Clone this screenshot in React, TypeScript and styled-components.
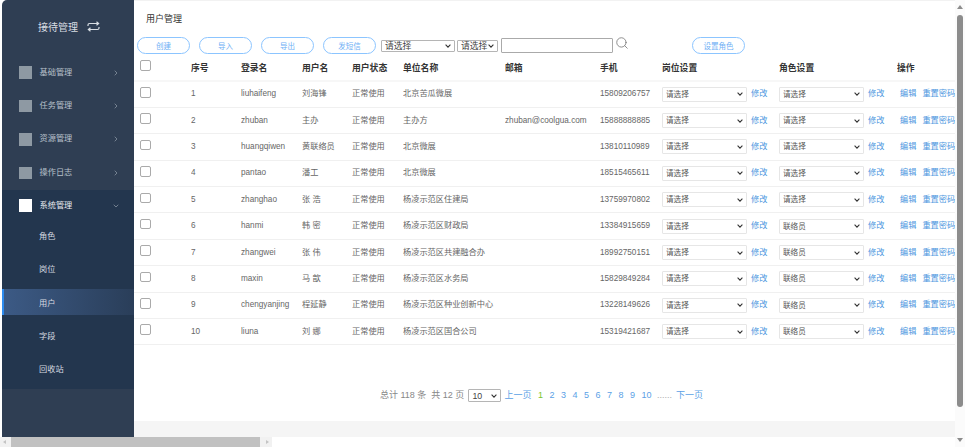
import { ChevronDown, ChevronRight, Search } from "lucide-react";
import styled, { createGlobalStyle, css } from "styled-components";

const GlobalStyle = createGlobalStyle`
  html, body {
    margin: 0;
    padding: 0;
    background: #fff;
    overflow: hidden;
  }
  * {
    box-sizing: border-box;
  }
  body {
    font-family: "Liberation Sans", "Noto Sans CJK SC", sans-serif;
  }
`;

const selectArrow =
  "data:image/svg+xml,%3Csvg xmlns='http://www.w3.org/2000/svg' width='6' height='4' viewBox='0 0 6 4'%3E%3Cpath d='M.6.7 3 3.1 5.4.7' fill='none' stroke='%23333' stroke-width='1.1'/%3E%3C/svg%3E";

const selectBase = css`
  appearance: none;
  padding: 0 0 0 3px;
  border-radius: 1px;
  background: #fff url("${selectArrow}") no-repeat right 3px center;
  font-family: inherit;
`;

const Page = styled.div`
  width: 965px;
  height: 447px;
  display: flex;
  overflow: hidden;
  background: #fff;
`;

const LeftColumn = styled.div`
  width: 955px;
  display: flex;
  flex-direction: column;
`;

const Workspace = styled.div`
  height: 437px;
  display: flex;
  padding-left: 2px;
`;

const Sidebar = styled.aside`
  width: 132px;
  flex-shrink: 0;
  background: #2f3e53;
  border-top-left-radius: 5px;
`;

const Brand = styled.div`
  height: 56px;
  display: flex;
  align-items: center;
  padding: 0 0 3px 36px;
  gap: 9px;
  color: #d8dde3;
  font-size: 10px;
`;

const MenuRow = styled.div<{ $open?: boolean }>`
  height: ${({ $open }) => ($open ? "29px" : "33.4px")};
  display: flex;
  align-items: center;
  padding: ${({ $open }) => ($open ? "3px" : "0")} 0 0 17px;
  color: ${({ $open }) => ($open ? "#e8ebef" : "#b9c1cb")};
  font-size: 8.2px;
  line-height: 12px;
  background: ${({ $open }) => ($open ? "#23364e" : "transparent")};
`;

const MenuIcon = styled.span<{ $open?: boolean }>`
  width: 12.5px;
  height: 12.5px;
  margin-right: 8px;
  background: ${({ $open }) => ($open ? "#fff" : "#8e99a3")};
`;

const MenuLabel = styled.span`
  flex: 1;
`;

const MenuArrow = styled.span`
  width: 8px;
  margin-right: 14px;
  display: flex;
  color: #9aa5b1;
`;

const SubMenu = styled.div`
  padding-bottom: 3px;
  background: #23364e;
`;

const SubItem = styled.div<{ $active?: boolean }>`
  height: ${({ $active }) => ($active ? "26.4px" : "33.4px")};
  margin: ${({ $active }) => ($active ? "3.5px 0" : "0")};
  display: flex;
  align-items: center;
  padding: 3px 0 0 ${({ $active }) => ($active ? "35px" : "37px")};
  color: #d5dae0;
  font-size: 8.2px;
  line-height: 12px;
  ${({ $active }) =>
    $active &&
    `
    background: linear-gradient(90deg, #3c5a85, #2a3e59);
    border-left: 2px solid #2d8cf0;
  `}
`;

const Main = styled.main`
  flex: 1;
  min-width: 0;
  display: flex;
  flex-direction: column;
  border-top: 1px solid #f2f2f2;
`;

const Panel = styled.div`
  height: 420px;
  background: #fff;
  overflow: hidden;
`;

const Footer = styled.div`
  flex: 1;
  background: #f5f5f5;
`;

const Title = styled.div`
  height: 36px;
  padding: 11px 0 0 12px;
  font-size: 9px;
  color: #333;
`;

const Toolbar = styled.div`
  height: 17px;
  display: flex;
  align-items: center;
  padding-left: 3px;
`;

const PillButton = styled.button<{ $gap?: number }>`
  width: 53px;
  height: 17px;
  margin-right: ${({ $gap }) => $gap ?? 9}px;
  padding: 0;
  border: 1px solid #8cc5ff;
  border-radius: 9px;
  background: #fff;
  color: #6fb0f5;
  font-family: inherit;
  font-size: 7.5px;
`;

const FilterSelect = styled.select<{ $width: number }>`
  ${selectBase}
  width: ${({ $width }) => $width}px;
  height: 12px;
  margin-right: 2px;
  border: 1px solid #b5b5b5;
  color: #444;
  font-size: 8.8px;
  line-height: 10px;
`;

const SearchInput = styled.input`
  width: 112px;
  height: 15px;
  margin-left: 1px;
  border: 1px solid #aaa;
  border-radius: 1px;
`;

const SearchButton = styled.span`
  width: 14px;
  margin: -5px 63px 0 2px;
  display: flex;
  color: #777;
`;

const Table = styled.table`
  width: 821px;
  margin-top: 1px;
  table-layout: fixed;
  border-collapse: collapse;
  font-size: 8.2px;
  line-height: 12px;
  color: #666;
`;

const HeadCell = styled.th<{ $width: number }>`
  width: ${({ $width }) => $width}px;
  height: 26px;
  padding: 0;
  border-bottom: 2px solid #f7f7f7;
  text-align: left;
  font-size: 8.8px;
  font-weight: 700;
  color: #333;
  white-space: nowrap;
  overflow: hidden;
`;

const Cell = styled.td`
  height: 26.4px;
  padding: 0;
  border-bottom: 1px solid #f0f0f0;
  white-space: nowrap;
  overflow: hidden;
`;

const Check = styled.input.attrs({ type: "checkbox" })`
  appearance: none;
  display: block;
  width: 10.5px;
  height: 10.5px;
  margin: -4px 0 0 6px;
  border: 1px solid #aaa;
  border-radius: 2px;
  background: #fff;
`;

const RowSelect = styled.select`
  ${selectBase}
  width: 85px;
  height: 15px;
  border: 1px solid #e6e6e6;
  color: #555;
  font-size: 7.6px;
  vertical-align: middle;
`;

const Link = styled.a`
  color: #4d97e0;
  font-size: 8.2px;
  white-space: nowrap;
`;

const EditLink = styled(Link)`
  margin-left: 4px;
  vertical-align: middle;
`;

const Actions = styled.div`
  display: flex;
  align-items: center;
  padding-left: 3px;
`;

const Divider = styled.span`
  width: 1px;
  height: 9px;
  margin: 0 3px 0 3px;
  background: #ddd;
`;

const Pagination = styled.div`
  height: 76px;
  padding: 44px 0 0 246px;
  display: flex;
  align-items: flex-start;
  color: #888;
  font-size: 9px;
  line-height: 12px;
  white-space: nowrap;
`;

const PageSize = styled.select`
  ${selectBase}
  width: 33px;
  height: 13px;
  margin: 0 3px 0 4px;
  border: 1px solid #b5b5b5;
  color: #444;
  font-size: 8.8px;
`;

const PageLink = styled.a<{ $current?: boolean }>`
  margin-right: 6.5px;
  color: ${({ $current }) => ($current ? "#7cc52e" : "#5b9fe6")};
`;

const Ellipsis = styled.span`
  margin: 0 4px 0 -1px;
  color: #aaa;
`;

const VerticalBar = styled.div`
  width: 10px;
  height: 447px;
  padding-top: 15px;
  display: flex;
  justify-content: center;
  background: #fbfbfb;
  position: relative;
`;

const VerticalThumb = styled.div`
  width: 6px;
  height: 392px;
  border-radius: 3px;
  background: #8c8c8c;
`;

const BarArrow = styled.span<{ $dir: "up" | "down" | "left" | "right" }>`
  position: absolute;
  width: 0;
  height: 0;
  ${({ $dir }) =>
    $dir === "up"
      ? "top: 5px; left: 2px; border: 3px solid transparent; border-top: 0; border-bottom: 4px solid #8c8c8c;"
      : $dir === "down"
        ? "bottom: 5px; left: 2px; border: 3px solid transparent; border-bottom: 0; border-top: 4px solid #8c8c8c;"
        : $dir === "left"
          ? "top: 3px; left: 3px; border: 2px solid transparent; border-left: 0; border-right: 3px solid #c4c4c4;"
          : "top: 3px; right: 3px; border: 2px solid transparent; border-right: 0; border-left: 3px solid #c4c4c4;"}
`;

const HorizontalRow = styled.div`
  height: 10px;
  background: #fff;
`;

const HorizontalBar = styled.div`
  width: 272px;
  height: 10px;
  padding-left: 11px;
  background: #f1f1f1;
  position: relative;
`;

const HorizontalThumb = styled.div`
  width: 249px;
  height: 10px;
  background: #c1c1c1;
`;

const columns = [
  { label: "", width: 57 },
  { label: "序号", width: 50 },
  { label: "登录名", width: 61 },
  { label: "用户名", width: 50 },
  { label: "用户状态", width: 51 },
  { label: "单位名称", width: 102 },
  { label: "邮箱", width: 95 },
  { label: "手机", width: 62 },
  { label: "岗位设置", width: 117 },
  { label: "角色设置", width: 118 },
  { label: "操作", width: 58 },
];

const users = [
  { login: "liuhaifeng", name: "刘海锋", org: "北京苦瓜微展", email: "", phone: "15809206757", role: "请选择" },
  { login: "zhuban", name: "主办", org: "主办方", email: "zhuban@coolgua.com", phone: "15888888885", role: "请选择" },
  { login: "huangqiwen", name: "黄联络员", org: "北京微展", email: "", phone: "13810110989", role: "请选择" },
  { login: "pantao", name: "潘工", org: "北京微展", email: "", phone: "18515465611", role: "请选择" },
  { login: "zhanghao", name: "张 浩", org: "杨凌示范区住建局", email: "", phone: "13759970802", role: "请选择" },
  { login: "hanmi", name: "韩 密", org: "杨凌示范区财政局", email: "", phone: "13384915659", role: "联络员" },
  { login: "zhangwei", name: "张 伟", org: "杨凌示范区共建融合办", email: "", phone: "18992750151", role: "联络员" },
  { login: "maxin", name: "马 歆", org: "杨凌示范区水务局", email: "", phone: "15829849284", role: "联络员" },
  { login: "chengyanjing", name: "程延静", org: "杨凌示范区种业创新中心", email: "", phone: "13228149626", role: "联络员" },
  { login: "liuna", name: "刘 娜", org: "杨凌示范区国合公司", email: "", phone: "15319421687", role: "联络员" },
];

const menus = ["基础管理", "任务管理", "资源管理", "操作日志"];
const subMenus = ["角色", "岗位", "用户", "字段", "回收站"];
const pages = [2, 3, 4, 5, 6, 7, 8, 9, 10];

const SwapIcon = () => (
  <svg width="13" height="11" viewBox="0 0 13 11" fill="none" stroke="#d8dde3" strokeWidth="1.2">
    <path d="M1 5V4a1.5 1.5 0 0 1 1.5-1.5H11.5M9.5 0.8 11.6 2.5 9.5 4.2" />
    <path d="M12 6v1a1.5 1.5 0 0 1-1.5 1.5H1.5M3.5 6.8 1.4 8.5 3.5 10.2" />
  </svg>
);

const App = () => (
  <Page>
    <GlobalStyle />
    <LeftColumn>
      <Workspace>
        <Sidebar>
          <Brand>
            接待管理
            <SwapIcon />
          </Brand>
          {menus.map((menu) => (
            <MenuRow key={menu}>
              <MenuIcon />
              <MenuLabel>{menu}</MenuLabel>
              <MenuArrow>
                <ChevronRight size={8} />
              </MenuArrow>
            </MenuRow>
          ))}
          <MenuRow $open>
            <MenuIcon $open />
            <MenuLabel>系统管理</MenuLabel>
            <MenuArrow>
              <ChevronDown size={8} />
            </MenuArrow>
          </MenuRow>
          <SubMenu>
            {subMenus.map((item) => (
              <SubItem key={item} $active={item === "用户"}>
                {item}
              </SubItem>
            ))}
          </SubMenu>
        </Sidebar>
        <Main>
          <Panel>
            <Title>用户管理</Title>
            <Toolbar>
              <PillButton>创建</PillButton>
              <PillButton>导入</PillButton>
              <PillButton>导出</PillButton>
              <PillButton $gap={5}>发短信</PillButton>
              <FilterSelect $width={74}>
                <option>请选择</option>
              </FilterSelect>
              <FilterSelect $width={41}>
                <option>请选择</option>
              </FilterSelect>
              <SearchInput />
              <SearchButton>
                <Search size={14} strokeWidth={1.4} />
              </SearchButton>
              <PillButton>设置角色</PillButton>
            </Toolbar>
            <Table>
              <thead>
                <tr>
                  {columns.map((col, index) => (
                    <HeadCell key={index} $width={col.width}>
                      {index === 0 ? <Check /> : col.label}
                    </HeadCell>
                  ))}
                </tr>
              </thead>
              <tbody>
                {users.map((user, index) => (
                  <tr key={user.login}>
                    <Cell>
                      <Check />
                    </Cell>
                    <Cell>{index + 1}</Cell>
                    <Cell>{user.login}</Cell>
                    <Cell>{user.name}</Cell>
                    <Cell>正常使用</Cell>
                    <Cell>{user.org}</Cell>
                    <Cell>{user.email}</Cell>
                    <Cell>{user.phone}</Cell>
                    <Cell>
                      <RowSelect>
                        <option>请选择</option>
                      </RowSelect>
                      <EditLink>修改</EditLink>
                    </Cell>
                    <Cell>
                      <RowSelect>
                        <option>{user.role}</option>
                      </RowSelect>
                      <EditLink>修改</EditLink>
                    </Cell>
                    <Cell>
                      <Actions>
                        <Link>编辑</Link>
                        <Divider />
                        <Link>重置密码</Link>
                      </Actions>
                    </Cell>
                  </tr>
                ))}
              </tbody>
            </Table>
            <Pagination>
              总计 118 条&nbsp;&nbsp;共 12 页
              <PageSize>
                <option>10</option>
              </PageSize>
              <PageLink>上一页</PageLink>
              <PageLink $current>1</PageLink>
              {pages.map((page) => (
                <PageLink key={page}>{page}</PageLink>
              ))}
              <Ellipsis>......</Ellipsis>
              <PageLink>下一页</PageLink>
            </Pagination>
          </Panel>
          <Footer />
        </Main>
      </Workspace>
      <HorizontalRow>
        <HorizontalBar>
          <BarArrow $dir="left" />
          <HorizontalThumb />
          <BarArrow $dir="right" />
        </HorizontalBar>
      </HorizontalRow>
    </LeftColumn>
    <VerticalBar>
      <BarArrow $dir="up" />
      <VerticalThumb />
      <BarArrow $dir="down" />
    </VerticalBar>
  </Page>
);

export default App;
